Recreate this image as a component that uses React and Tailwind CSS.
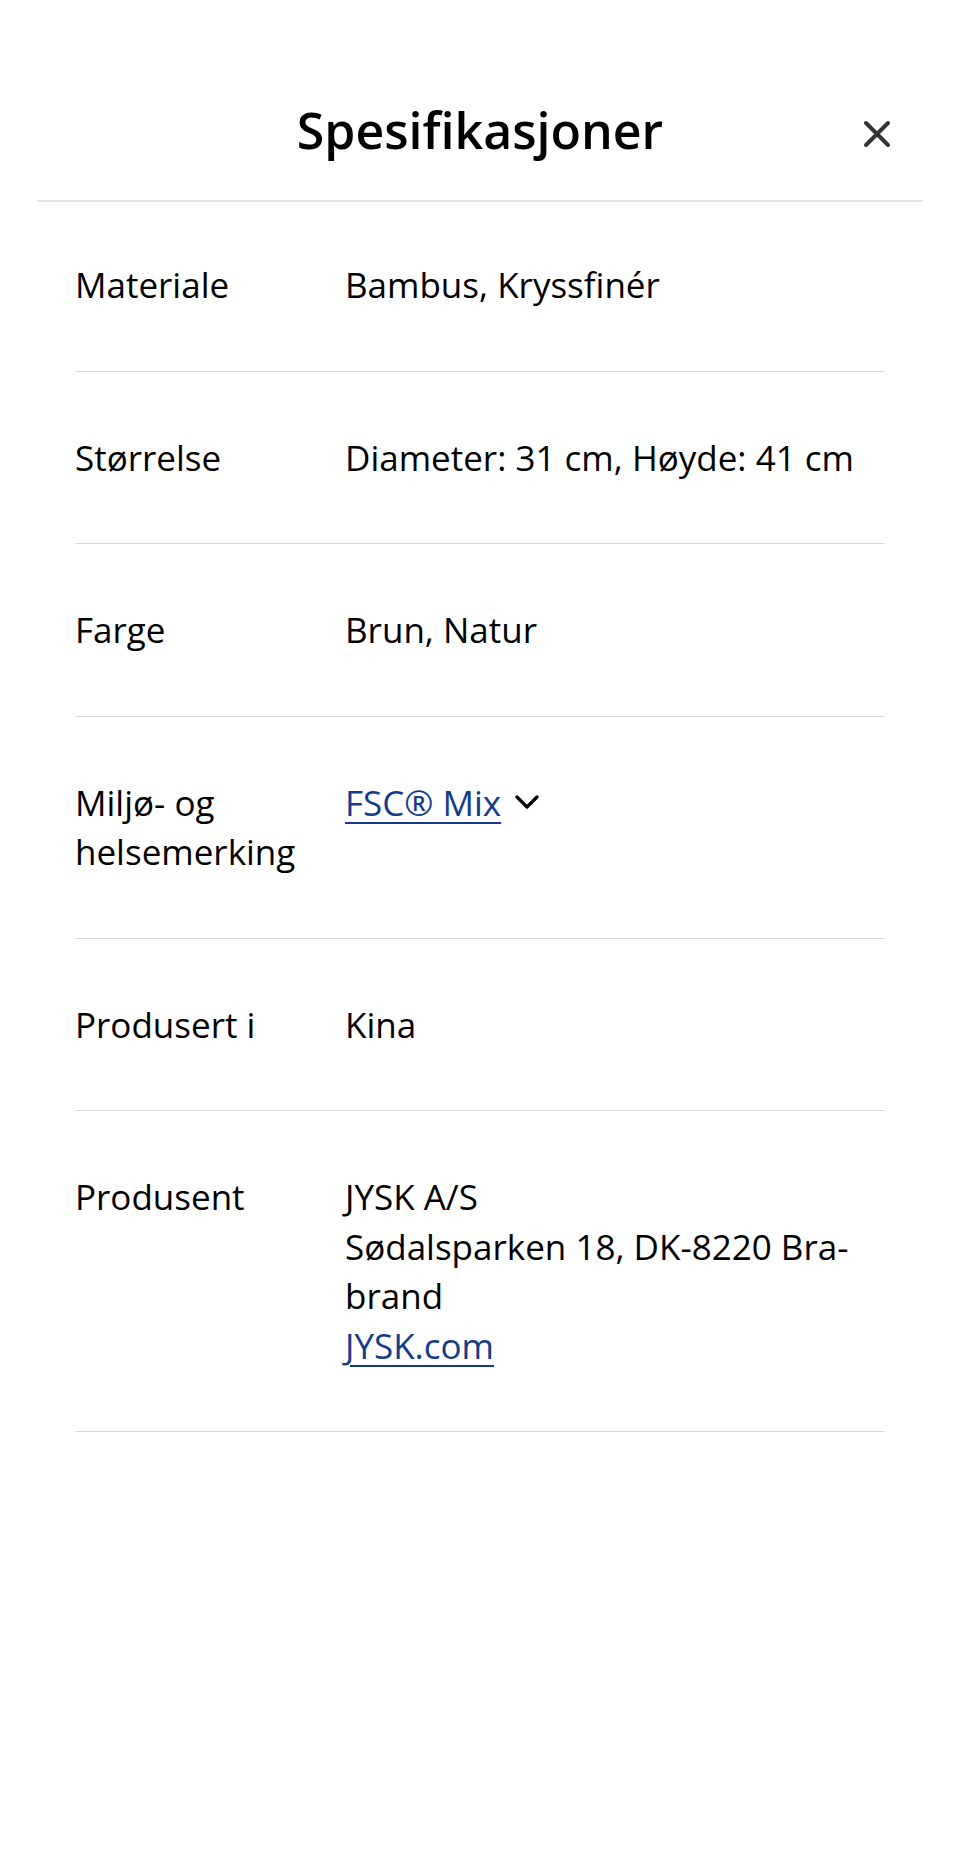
const rows = [
  { label: "Materiale", value: "Bambus, Kryssfinér" },
  { label: "Størrelse", value: "Diameter: 31 cm, Høyde: 41 cm" },
  { label: "Farge", value: "Brun, Natur" },
  { label: "Miljø- og helsemerking", type: "cert" },
  { label: "Produsert i", value: "Kina" },
  { label: "Produsent", type: "maker" },
];

function Chevron() {
  return (
    <svg width="24" height="14" viewBox="0 0 24 14" fill="none" className="shrink-0">
      <path d="M2 2l10 10L22 2" stroke="#000" strokeWidth="3.2" strokeLinecap="round" strokeLinejoin="round" />
    </svg>
  );
}

function Value({ row }) {
  if (row.type === "cert") {
    return (
      <div className="flex items-center gap-[14px]">
        <a href="#" className="text-[#143c8a] underline decoration-2 underline-offset-[6px]">
          FSC® Mix
        </a>
        <Chevron />
      </div>
    );
  }
  if (row.type === "maker") {
    return (
      <div>
        <div>JYSK A/S</div>
        <div>
          Sødalsparken 18, DK-8220 Bra-
          <br />
          brand
        </div>
        <a href="#" className="text-[#143c8a] underline decoration-2 underline-offset-[6px]">
          JYSK.com
        </a>
      </div>
    );
  }
  return <div>{row.value}</div>;
}

export default function App() {
  return (
    <div className="min-h-[1876px] w-full bg-white font-['Open_Sans',sans-serif] text-black">
      {/* header */}
      <div className="px-[37px]">
        <div className="grid grid-cols-[1fr_auto_1fr] items-center pt-[94px] pb-[33px] border-b-2 border-[#e3e3e3]">
          <div />
          <h1 className="text-[50px] leading-[73px] font-semibold">Spesifikasjoner</h1>
          <button className="justify-self-end mr-[24px] mt-[6px] p-2">
            <svg width="28" height="28" viewBox="0 0 28 28" fill="none">
              <path d="M3 3l22 22M25 3L3 25" stroke="#333" strokeWidth="4" strokeLinecap="round" />
            </svg>
          </button>
        </div>
      </div>

      {/* rows */}
      <div className="px-[75px] text-[35px] leading-[49.5px]">
        {rows.map((row) => (
          <div key={row.label} className="grid grid-cols-3 py-[61px] first:pt-[58px] border-b border-[#dcdcdc]">
            <div className="pr-6">{row.label}</div>
            <div className="col-span-2">
              <Value row={row} />
            </div>
          </div>
        ))}
      </div>
    </div>
  );
}
